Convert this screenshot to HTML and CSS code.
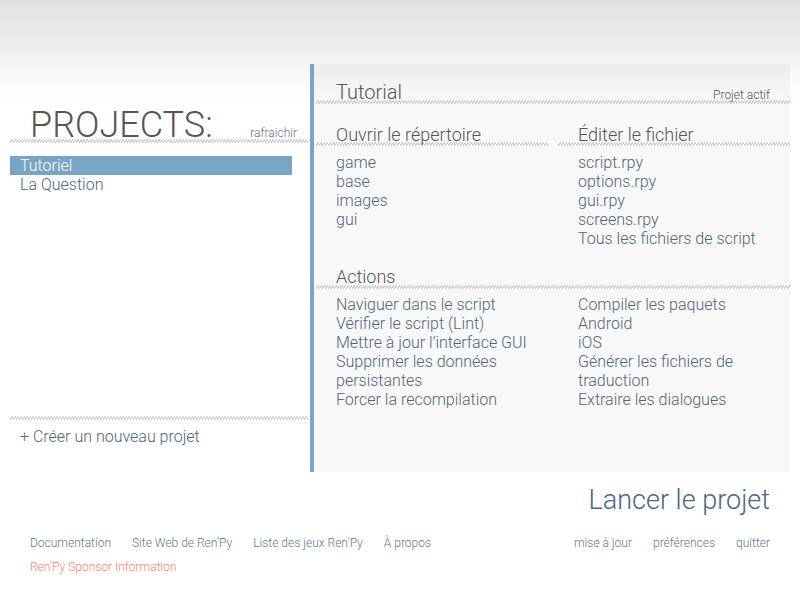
FILE: index.html
```html
<!DOCTYPE html>
<html lang="fr">
<head>
<meta charset="utf-8">
<title>Ren'Py Launcher</title>
<link rel="stylesheet" href="styles.css">
</head>
<body>
<div class="main">
  <section class="projects">
    <div class="label big">
      <span class="label-title">PROJECTS:</span>
      <span class="label-aside link">rafraichir</span>
    </div>
    <ul class="project-list">
      <li class="project selected">Tutoriel</li>
      <li class="project">La Question</li>
    </ul>
    <div class="create">+ Créer un nouveau projet</div>
  </section>
  <section class="panel">
    <div class="label head">
      <span class="label-title">Tutorial</span>
      <span class="label-aside">Projet actif</span>
    </div>
    <div class="cols">
      <div class="col">
        <div class="label sub"><span class="label-title">Ouvrir le répertoire</span></div>
        <ul class="items">
          <li>game</li>
          <li>base</li>
          <li>images</li>
          <li>gui</li>
        </ul>
      </div>
      <div class="col">
        <div class="label sub"><span class="label-title">Éditer le fichier</span></div>
        <ul class="items">
          <li>script.rpy</li>
          <li>options.rpy</li>
          <li>gui.rpy</li>
          <li>screens.rpy</li>
          <li>Tous les fichiers de script</li>
        </ul>
      </div>
    </div>
    <div class="label sub actions-label"><span class="label-title">Actions</span></div>
    <div class="cols">
      <ul class="items col action-list">
        <li>Naviguer dans le script</li>
        <li>Vérifier le script (Lint)</li>
        <li>Mettre à jour l’interface GUI</li>
        <li>Supprimer les données persistantes</li>
        <li>Forcer la recompilation</li>
      </ul>
      <ul class="items col action-list">
        <li>Compiler les paquets</li>
        <li>Android</li>
        <li>iOS</li>
        <li>Générer les fichiers de traduction</li>
        <li>Extraire les dialogues</li>
      </ul>
    </div>
  </section>
</div>
<div class="launch">Lancer le projet</div>
<footer class="footer">
  <div class="footer-row">
    <nav class="links">
      <span>Documentation</span>
      <span>Site Web de Ren’Py</span>
      <span>Liste des jeux Ren’Py</span>
      <span>À propos</span>
    </nav>
    <nav class="links">
      <span>mise à jour</span>
      <span>préférences</span>
      <span>quitter</span>
    </nav>
  </div>
  <div class="sponsor">Ren’Py Sponsor Information</div>
</footer>
</body>
</html>
```
FILE: styles.css
```css
* { box-sizing: border-box; }
html, body { margin: 0; padding: 0; }
body {
  width: 800px;
  height: 600px;
  overflow: hidden;
  font-family: Roboto, "Liberation Sans", sans-serif;
  font-weight: 300;
  color: #555;
  background: linear-gradient(#e1e1e1 0, #ffffff 100px) no-repeat;
  background-color: #fff;
}
ul { list-style: none; margin: 0; padding: 0; }

.main {
  display: flex;
  padding-top: 64px;
  height: 472px;
}

/* hatched rule */
.label,
.create {
  background-image: linear-gradient(to bottom right, transparent 39%, #cdcdcd 39% 61%, transparent 61%);
  background-size: 3px 4px;
  background-repeat: repeat-x;
}
.label {
  display: flex;
  justify-content: space-between;
  align-items: baseline;
  line-height: 1;
  background-position: left 0 bottom 1px;
}
.label-title { white-space: nowrap; }
.label-aside { font-size: 12px; color: #555; }
.link { color: #5b7590; }

/* left column */
.projects {
  width: 310px;
  padding: 0 2px 0 10px;
  display: flex;
  flex-direction: column;
}
.label.big {
  margin-top: 43px;
  padding: 0 11px 1px 20px;
  font-size: 36px;
  color: #555;
}
.project-list {
  margin-top: 12px;
  flex: 1;
  padding-right: 16px;
}
.project {
  font-size: 16px;
  line-height: 19px;
  padding-left: 10px;
  color: #4d6681;
}
.project.selected {
  background: #78a5c6;
  color: #fff;
}
.create {
  padding: 12px 10px 26px;
  font-size: 16px;
  line-height: 19px;
  color: #4d6681;
  background-position: left 0 top 1px;
}

/* right panel */
.panel {
  width: 480px;
  border-left: 4px solid #78a5c6;
  padding-left: 2px;
  background: rgba(0, 0, 0, 0.027);
}
.label.head {
  margin-top: 18px;
  padding: 0 20px 3px 20px;
  font-size: 20px;
}
.cols {
  display: grid;
  grid-template-columns: 232px 232px;
  column-gap: 10px;
}
.label.sub {
  padding: 0 0 3px 20px;
  font-size: 18px;
}
.col > .label.sub { margin-top: 21px; }
.actions-label { margin-top: 20px; padding-bottom: 4px !important; }
.items {
  margin-top: 6px;
  padding-left: 20px;
  font-size: 16px;
  line-height: 19px;
  color: #4d6681;
}
.items.action-list { margin-top: 5px; }

/* launch + footer */
.launch {
  text-align: right;
  padding: 11px 30px 0 0;
  font-size: 27px;
  line-height: 34px;
  color: #4a6682;
}
.footer {
  padding: 18px 30px 0 30px;
  font-size: 12px;
  line-height: 16px;
}
.footer-row {
  display: flex;
  justify-content: space-between;
}
.links {
  display: flex;
  gap: 21px;
  color: #5f7891;
}
.sponsor {
  margin-top: 8px;
  color: #ff7f68;
}
```
